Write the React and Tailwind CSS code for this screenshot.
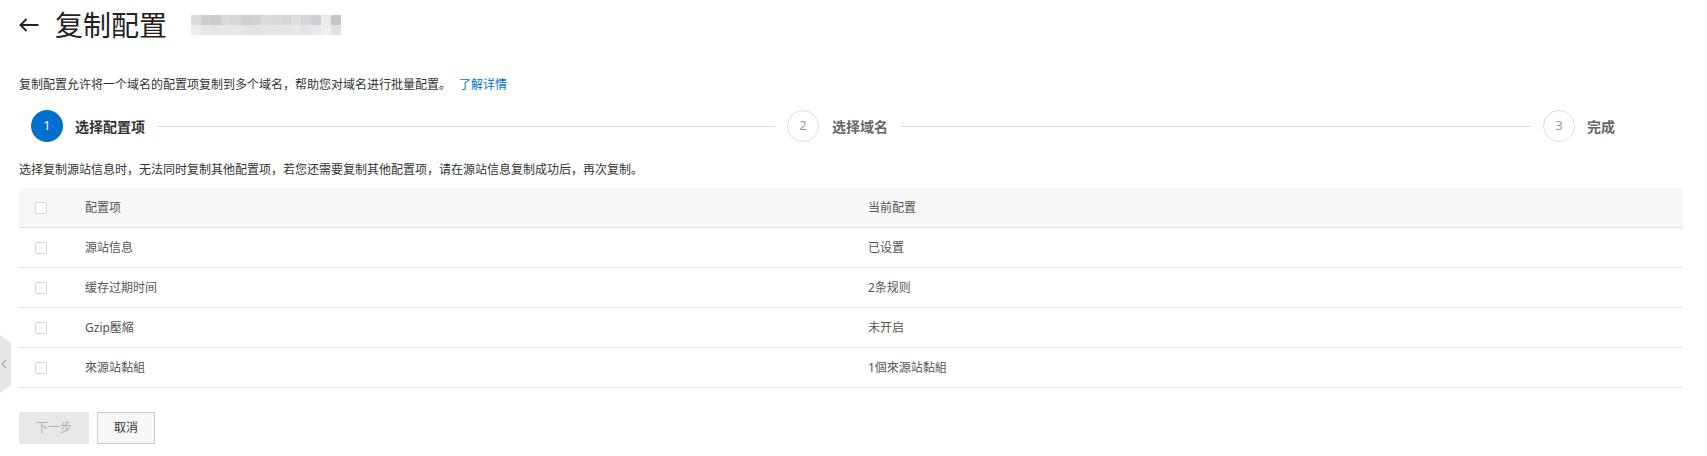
import React from "react";

const blurTop = [
  "#dcdce0", "#cfccca", "#c9ccca", "#dcdad8", "#d8d7d2", "#d0cfcf", "#cfd0d6", "#dbdcdc",
  "#dadada", "#d5d7d8", "#e0dfdd", "#d7d6d8", "#cdced6", "#ebecea", "#c3c6c3",
];
const blurBottom = [
  "#ededed", "#e6e6e4", "#e4e6e4", "#e8e8eb", "#e8e8e4", "#e3e3e3", "#e2e2e4", "#e4e4e4",
  "#e6e6e6", "#e4e6e6", "#e8e8e6", "#e4e3e6", "#e8e8ee", "#eeefee", "#e2e2e0",
];

const rows = [
  { name: "源站信息", value: "已设置" },
  { name: "缓存过期时间", value: "2条规则" },
  { name: "Gzip壓縮", value: "未开启" },
  { name: "來源站黏組", value: "1個來源站黏組" },
];

function Checkbox() {
  return <span className="block w-3 h-3 border border-[#d7d7d7] bg-white rounded-[1px]" />;
}

function StepCircle({ n, active }) {
  return active ? (
    <span className="flex w-8 h-8 shrink-0 items-center justify-center rounded-full bg-[#0070cc] text-white text-[13px]">
      {n}
    </span>
  ) : (
    <span className="flex w-8 h-8 shrink-0 items-center justify-center rounded-full border border-[#dedede] bg-white text-[#999] text-[13px]">
      {n}
    </span>
  );
}

export default function App() {
  return (
    <div className="relative min-h-screen bg-white text-[#333] font-['Noto_Sans','Noto_Sans_CJK_SC',sans-serif]">
      {/* header */}
      <div className="flex h-[50px] items-center pl-[19px]">
        <svg width="20" height="14" viewBox="0 0 20 14" fill="none" stroke="#222" strokeWidth="1.9">
          <path d="M19.5 7H1.5M7.5 1L1.5 7l6 6" />
        </svg>
        <h1 className="ml-[16px] text-[28px] leading-none text-[#222]">复制配置</h1>
        <div className="ml-6 flex flex-col">
          <div className="flex">
            {blurTop.map((c, i) => (
              <span key={i} className="block w-[10px] h-[10px]" style={{ backgroundColor: c }} />
            ))}
          </div>
          <div className="flex">
            {blurBottom.map((c, i) => (
              <span key={i} className="block w-[10px] h-[10px]" style={{ backgroundColor: c }} />
            ))}
          </div>
        </div>
      </div>

      <div className="pl-[19px] pr-6">
        <p className="mt-[26px] text-[12px] leading-[18px]">
          复制配置允许将一个域名的配置项复制到多个域名，帮助您对域名进行批量配置。
          <a href="#" className="ml-[8px] text-[#0070cc]">了解详情</a>
        </p>

        {/* steps */}
        <div className="mt-4 ml-3 mr-[68px] flex items-center h-8">
          <div className="flex flex-1 items-center">
            <StepCircle n="1" active />
            <span className="ml-3 text-[14px] font-bold text-[#333]">选择配置项</span>
            <span className="mx-3 h-px flex-1 bg-[#dddddd]" />
          </div>
          <div className="flex flex-1 items-center">
            <StepCircle n="2" />
            <span className="ml-[13px] text-[14px] font-bold text-[#666]">选择域名</span>
            <span className="mx-3 h-px flex-1 bg-[#dddddd]" />
          </div>
          <div className="flex items-center">
            <StepCircle n="3" />
            <span className="ml-3 text-[14px] font-bold text-[#666]">完成</span>
          </div>
        </div>

        <p className="mt-[19px] text-[12px] leading-[18px]">
          选择复制源站信息时，无法同时复制其他配置项，若您还需要复制其他配置项，请在源站信息复制成功后，再次复制。
        </p>

        {/* table */}
        <div className="mt-[9px] text-[12px] text-[#555]">
          <div className="grid grid-cols-[66px_783px_1fr] h-[40px] items-center bg-[#f7f7f7] border-b border-[#e3e3e3]">
            <div className="pl-4"><Checkbox /></div>
            <div>配置项</div>
            <div>当前配置</div>
          </div>
          {rows.map((r) => (
            <div key={r.name} className="grid grid-cols-[66px_783px_1fr] h-[40px] items-center border-b border-[#e3e3e3]">
              <div className="pl-4"><Checkbox /></div>
              <div>{r.name}</div>
              <div>{r.value}</div>
            </div>
          ))}
        </div>

        {/* actions */}
        <div className="mt-6 flex gap-2">
          <button disabled className="h-8 px-[17px] bg-[#e8e8e8] text-[#b0b0b0] text-[12px]">下一步</button>
          <button className="h-8 px-4 bg-[#f7f7f7] border border-[#cccccc] text-[#333] text-[12px]">取消</button>
        </div>
      </div>

      {/* side collapse tab */}
      <div className="absolute left-0 top-[335px] w-[11px] h-[58px] bg-[#e6e6e6] [clip-path:polygon(0_0,100%_14%,100%_86%,0_100%)] flex items-center">
        <svg width="6" height="10" viewBox="0 0 6 10" fill="none" stroke="#aaa" strokeWidth="1.2" className="ml-px">
          <path d="M5 1L1 5l4 4" />
        </svg>
      </div>
    </div>
  );
}
